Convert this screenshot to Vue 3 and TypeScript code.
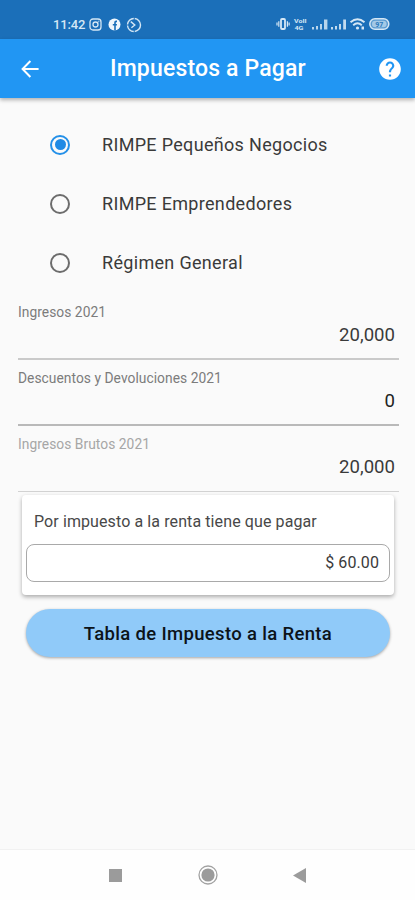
<script setup lang="ts">
import { ref } from 'vue'

interface Field {
  label: string
  value: string
  tone: 'soft' | 'strong' | 'disabled'
}

const regimes: string[] = ['RIMPE Pequeños Negocios', 'RIMPE Emprendedores', 'Régimen General']
const selected = ref(0)

const fields: Field[] = [
  { label: 'Ingresos 2021', value: '20,000', tone: 'soft' },
  { label: 'Descuentos y Devoluciones 2021', value: '0', tone: 'strong' },
  { label: 'Ingresos Brutos 2021', value: '20,000', tone: 'disabled' },
]
</script>

<template>
  <div class="screen">
    <div class="status">
      <div class="status-left">
        <span class="clock">11:42</span>
        <svg class="s-icon insta" width="13" height="13" viewBox="0 0 13 13" fill="none" stroke="currentColor">
          <rect x="1" y="1" width="11" height="11" rx="3" stroke-width="1.3" />
          <circle cx="6.5" cy="6.5" r="2.5" stroke-width="1.3" />
          <circle cx="9.6" cy="3.5" r=".5" stroke-width=".6" />
        </svg>
        <svg class="s-icon fb" width="13" height="13" viewBox="0 0 13 13">
          <circle cx="6.5" cy="6.5" r="6" fill="currentColor" />
          <path d="M9 3.4H8.1Q7 3.4 7 4.6V12.6M4.8 6.8H8.9" fill="none" stroke="#1b6fb9" stroke-width="1.6" />
        </svg>
        <svg class="s-icon" width="16" height="16" viewBox="0 0 16 16" fill="none" stroke="currentColor">
          <circle cx="8" cy="8" r="6.5" stroke-width="1.4" stroke-dasharray="9.2 1" />
          <path d="M4.8 4.6L8.8 8L5.4 10.8" stroke-width="1.4" />
        </svg>
      </div>
      <div class="status-right">
        <svg width="115" height="16" viewBox="0 0 115 16" fill="currentColor">
          <rect x="5" y="3" width="4" height="10" rx="1" fill="none" stroke="currentColor" stroke-width="1.8" />
          <path d="M.4 6.5h1.2v3H.4zM2.2 5.2h1.2v5.6h-1.2zM10.8 5.2h1.2v5.6h-1.2zM12.5 6.5h1.2v3h-1.2z" />
          <text x="18" y="7.3" class="tiny" textLength="12.5" lengthAdjust="spacingAndGlyphs">VoII</text>
          <text x="18.5" y="13.8" class="tiny" textLength="9" lengthAdjust="spacingAndGlyphs">4G</text>
          <path d="M36 11h2v2.5h-2zM40 10h2v3.5h-2zM44 8h2v5.5h-2zM48 3.5h3.4v10h-3.4z" opacity=".85" />
          <path d="M55 11h2v2.5h-2zM59 10h2v3.5h-2zM63 8h2v5.5h-2zM67.2 3.5h2.8v10h-2.8z" opacity=".9" />
          <g fill="none" stroke="currentColor" stroke-width="1.9">
            <path d="M74.5 6.3Q81.5 .4 88.5 6.3" />
            <path d="M77.2 9.2Q81.5 5.5 85.8 9.2" />
          </g>
          <circle cx="81.5" cy="12" r="1.6" />
          <path d="M85.5 10.5h2.5v3h-2.5z" />
          <rect x="93.8" y="2.8" width="19" height="10.4" rx="5.2" fill="#5b9bd0" stroke="currentColor" stroke-width="1.5" />
          <rect x="96" y="4.7" width="14.6" height="6.6" rx="3.3" opacity=".6" />
          <text x="99.3" y="10.5" class="pct">97</text>
        </svg>
      </div>
    </div>

    <header class="appbar">
      <svg class="back" width="18" height="18" viewBox="0 0 18 18" fill="none" stroke="#fff" stroke-width="2">
        <path d="M17.6 9H2M9.4 1L1.6 9L9.4 17" />
      </svg>
      <h1>Impuestos a Pagar</h1>
      <svg class="help" width="26" height="26" viewBox="0 0 24 24">
        <path fill="#fff" d="M12 2C6.48 2 2 6.48 2 12s4.48 10 10 10 10-4.48 10-10S17.52 2 12 2zm1 17h-2v-2h2v2zm2.07-7.75l-.9.92C13.45 12.9 13 13.5 13 15h-2v-.5c0-1.1.45-2.1 1.17-2.83l1.24-1.26c.37-.36.59-.86.59-1.41 0-1.1-.9-2-2-2s-2 .9-2 2H8c0-2.21 1.79-4 4-4s4 1.79 4 4c0 .88-.36 1.68-.93 2.25z" />
      </svg>
    </header>

    <main class="content">
      <div class="regimes">
        <div v-for="(name, i) in regimes" :key="name" class="regime" @click="selected = i">
          <span class="radio" :class="{ on: selected === i }"></span>
          <span class="name">{{ name }}</span>
        </div>
      </div>

      <div class="fields">
        <div v-for="f in fields" :key="f.label" class="field" :class="f.tone">
          <span class="label">{{ f.label }}</span>
          <span class="value">{{ f.value }}</span>
        </div>
      </div>

      <section class="card">
        <p>Por impuesto a la renta tiene que pagar</p>
        <div class="total"><span>$ 60.00</span></div>
      </section>

      <button class="table-btn"><span>Tabla de Impuesto a la Renta</span></button>
    </main>

    <nav class="navbar">
      <svg width="13" height="13" viewBox="0 0 13 13"><rect width="13" height="13" fill="#9b9b9b" /></svg>
      <svg width="20" height="20" viewBox="0 0 20 20">
        <circle cx="10" cy="10" r="9" fill="none" stroke="#a2a2a2" stroke-width="1.3" />
        <circle cx="10" cy="10" r="6.6" fill="#9b9b9b" />
      </svg>
      <svg width="13" height="15" viewBox="0 0 13 15"><path d="M13 0V15L0 7.5Z" fill="#9b9b9b" /></svg>
    </nav>
  </div>
</template>

<style>
body {
  background: #fafafa;
}
</style>

<style scoped>
.screen {
  width: 415px;
  height: 900px;
  display: flex;
  flex-direction: column;
  overflow: hidden;
  background: #fafafa;
  font-family: Roboto, sans-serif;
  color: #3a3a3a;
}
.screen * {
  box-sizing: border-box;
}
.status {
  height: 39px;
  flex: none;
  display: flex;
  justify-content: space-between;
  padding: 16px 24px 0 53px;
  background: #1b6fb9;
  color: #d5e7f5;
}
.status-left {
  display: flex;
  align-items: center;
  height: 17px;
}
.clock {
  width: 32px;
  font-size: 13px;
  font-weight: 500;
  letter-spacing: -0.15px;
  white-space: nowrap;
}
.insta {
  margin: 0 6px 0 4px;
}
.fb {
  margin-right: 5px;
  color: #f0f7fd;
}
.tiny {
  font-size: 5.2px;
  font-weight: 700;
}
.pct {
  font-size: 7px;
  font-weight: 700;
  fill: #2b78bb;
}
.appbar {
  position: relative;
  z-index: 1;
  height: 59px;
  flex: none;
  display: flex;
  align-items: center;
  padding: 0 12px 0 21px;
  background: #2196f3;
  box-shadow: 0 2px 4px rgba(0, 0, 0, 0.3);
}
.appbar h1 {
  flex: 1;
  margin: 0 0 0 71px;
  color: #fff;
  font-size: 23px;
  font-weight: 500;
  letter-spacing: 0.16px;
  line-height: 59px;
  white-space: nowrap;
}
.content {
  flex: 1;
  padding: 17px 16px 0 18px;
}
.regime {
  height: 59.3px;
  display: flex;
  align-items: center;
  padding-left: 32px;
}
.radio {
  width: 20px;
  height: 20px;
  margin-right: 32px;
  display: flex;
  align-items: center;
  justify-content: center;
  border: 2px solid #6c6c6c;
  border-radius: 50%;
}
.radio.on {
  border-color: #2490e8;
}
.radio.on::after {
  content: '';
  width: 11px;
  height: 11px;
  border-radius: 50%;
  background: #1f8ae5;
}
.name {
  margin-top: -1px;
  font-size: 18px;
  letter-spacing: 0.32px;
  white-space: nowrap;
}
.fields {
  padding-top: 1px;
}
.field {
  height: 66.3px;
  display: flex;
  flex-direction: column;
  padding-top: 10px;
  border-bottom: 2px solid #cacaca;
}
.field.strong {
  border-color: #b9b9b9;
}
.field.disabled {
  height: 65.3px;
  border-bottom: 1px solid #d2d2d2;
}
.label {
  font-size: 13.8px;
  line-height: 16px;
  letter-spacing: 0.04px;
  color: #7c7c7c;
}
.disabled .label {
  color: #a6a6a6;
}
.value {
  padding-right: 4px;
  font-size: 18.6px;
  line-height: 26px;
  text-align: right;
  margin-top: 2px;
}
.strong .value {
  color: #222;
}
.card {
  height: 100px;
  margin: 3px 5px 0 4px;
  padding: 17px 4px 0;
  border-radius: 4px;
  background: #fff;
  box-shadow: 0 2px 4px rgba(0, 0, 0, 0.32);
}
.card p {
  margin: 0 0 12px 8px;
  font-size: 16px;
  line-height: 20px;
  letter-spacing: 0.1px;
  color: #484848;
  white-space: nowrap;
}
.total {
  height: 38px;
  display: flex;
  align-items: center;
  justify-content: flex-end;
  padding-right: 10px;
  border: 1px solid #a9a9a9;
  border-radius: 8px;
  font-size: 16px;
  letter-spacing: 0.1px;
}
.table-btn {
  display: block;
  width: 364px;
  height: 48px;
  margin: 14px 0 0 8px;
  padding: 0;
  border: 0;
  border-radius: 24px;
  background: #90caf9;
  box-shadow: 0 1px 3px rgba(0, 0, 0, 0.35);
  color: #0c1319;
  font-family: inherit;
  font-size: 18.5px;
  font-weight: 500;
  letter-spacing: 0.33px;
}
.table-btn span {
  position: relative;
  top: 1px;
}
.navbar {
  height: 51px;
  flex: none;
  display: grid;
  grid-template-columns: 20px 20px 20px;
  column-gap: 72px;
  justify-content: center;
  align-items: center;
  justify-items: center;
  border-top: 1px solid #f1f1f1;
  background: #fefefe;
}
</style>
